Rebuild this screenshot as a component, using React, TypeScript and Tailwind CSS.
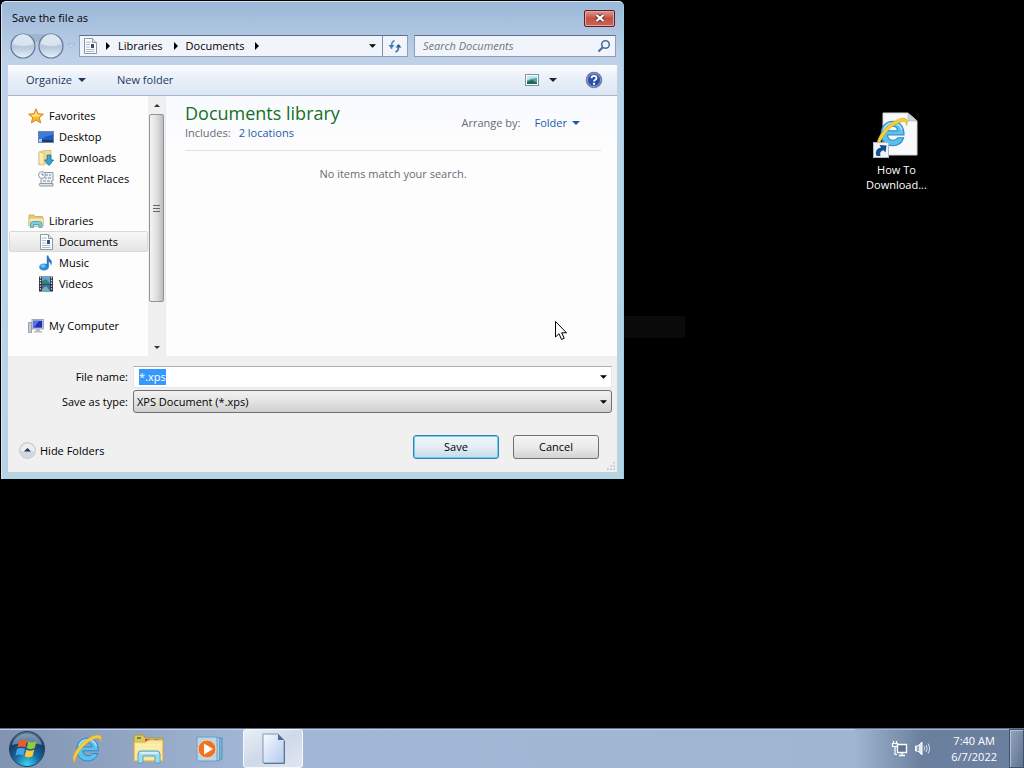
import { useEffect, useRef } from "react";
import type { ReactNode } from "react";

interface TreeItem {
  label: string;
  icon: ReactNode;
  selected?: boolean;
}

interface TreeGroup extends TreeItem {
  items: TreeItem[];
}

const Caret = ({
  size = "w-2 h-1",
  className = "",
}: {
  size?: string;
  className?: string;
}) => (
  <svg viewBox="0 0 8 4" className={`shrink-0 ${size} ${className}`}>
    <path d="M0 0H8L4 4Z" fill="currentColor" />
  </svg>
);

const Chevron = () => (
  <svg viewBox="0 0 4 8" className="w-1 h-2 shrink-0">
    <path d="M0 0L4 4L0 8Z" fill="#000" />
  </svg>
);

const StarIcon = () => (
  <svg viewBox="0 0 16 16" className="w-4 h-4">
    <path
      d="M8 .8L10 5.8L15.4 6.2L11.3 9.6L12.7 14.9L8 12L3.4 14.9L4.7 9.6L.6 6.2L6 5.8Z"
      fill="#fbb829"
      stroke="#d8801c"
      strokeWidth="1"
      strokeLinejoin="round"
    />
    <path d="M8 2.8L9.3 6.6L13 7L10 8.6L8 8.4L5 9L3.4 7L6.7 6.6Z" fill="#ffe57c" />
  </svg>
);

const DesktopIcon = () => (
  <svg viewBox="0 0 16 16" className="w-4 h-4">
    <rect x=".5" y="2.5" width="15" height="11" fill="#2358b5" stroke="#6b87ae" />
    <path d="M1 3H15V6Q8 6 1 12Z" fill="#3f7bd6" />
    <rect x="1" y="11" width="14" height="2" fill="#18386f" />
    <rect x="1" y="10" width="3" height="3" fill="#8ed0ee" />
  </svg>
);

const DownloadsIcon = () => (
  <svg viewBox="0 0 16 16" className="w-4 h-4">
    <path d="M1 2L6 .5H13V14H6L1 15Z" fill="#f3dd8c" stroke="#cdb15c" strokeWidth=".7" />
    <path d="M1 2L6 3V15L1 14.5Z" fill="#fbeeb4" stroke="#cdb15c" strokeWidth=".6" />
    <path
      d="M9 5H13V10H15.7L11 15.5L6.5 10H9Z"
      fill="#3ba1dc"
      stroke="#1c6ea5"
      strokeWidth=".8"
    />
  </svg>
);

const RecentIcon = () => (
  <svg viewBox="0 0 16 16" className="w-4 h-4">
    <path d="M5 1.5H15V10H13.5V13H3V8" fill="#eef1f5" stroke="#8e99a8" />
    <path d="M7 4H10M11 4H13M7 7H9M10 7H13M5 10H8M9 10H12" stroke="#77859a" />
    <path d="M1.5 12.5H15V15H2Q.8 14 1.5 12.5Z" fill="#dfe3e9" stroke="#8e99a8" />
    <circle cx="4" cy="4" r="3.4" fill="#fafcff" stroke="#8e99a8" />
    <path d="M4 2V4H6" stroke="#5b6d85" fill="none" strokeWidth=".8" />
  </svg>
);

const LibrariesIcon = () => (
  <svg viewBox="0 0 16 16" className="w-4 h-4">
    <path d="M1 2H6L7 3.5H14.5V13H1Z" fill="#e8cd70" stroke="#c1a14a" strokeWidth=".7" />
    <path d="M1 5H15.5V13H1Z" fill="#f8e9a6" stroke="#c9ae5e" strokeWidth=".6" />
    <path
      d="M2.5 14.5V11Q2.5 8.5 5 8.5H11.5Q14 8.5 14 11V14.5H11V11.5H5.5V14.5Z"
      fill="#7ccbe8"
      stroke="#4698bd"
      strokeWidth=".8"
    />
  </svg>
);

const DocumentIcon = () => (
  <svg viewBox="0 0 16 16" className="w-4 h-4">
    <path d="M2.5 .5H10.5L14.5 4.5V15.5H2.5Z" fill="#fcfdfe" stroke="#8a97a8" />
    <path d="M10.5 .5V4.5H14.5" fill="#dde5ee" stroke="#8a97a8" />
    <path
      d="M4 4H9M4 6.5H8M4 9H8M4 11.5H12.5M4 13.5H12.5"
      stroke="#97a8bd"
      strokeWidth=".8"
    />
    <rect x="9" y="6" width="3" height="4" fill="#35506f" />
  </svg>
);

const MusicIcon = () => (
  <svg viewBox="0 0 16 16" className="w-4 h-4">
    <ellipse cx="6" cy="12" rx="4.8" ry="3.6" fill="#2b8bd4" />
    <ellipse cx="5" cy="11" rx="2.6" ry="1.7" fill="#6fc0f0" />
    <path
      d="M8.8 12V.5H10.2Q10.7 3 12.5 4.5Q15 7 12.8 11Q13 7.5 10.8 6.5V12Z"
      fill="#2577c4"
    />
  </svg>
);

const VideosIcon = () => (
  <svg viewBox="0 0 16 16" className="w-4 h-4">
    <rect x="1" y=".5" width="14" height="15" fill="#2c3037" />
    <rect x="4" y="1" width="8" height="6.5" fill="#58a9d8" />
    <rect x="4" y="8.5" width="8" height="6.5" fill="#3a6f9c" />
    <path d="M4 5L8 3L12 7.5H4Z" fill="#3b8074" />
    <path d="M4 13L8 10L12 15H4Z" fill="#69b6c4" />
    <path
      d="M2.5 1V15M13.5 1V15"
      stroke="#e7ebef"
      strokeWidth="1.3"
      strokeDasharray="1.4 1.4"
    />
  </svg>
);

const ComputerIcon = () => (
  <svg viewBox="0 0 16 16" className="w-4 h-4">
    <path d="M.5 4.5H3.5V14.5H.5Z" fill="#c7ccd3" stroke="#858e99" strokeWidth=".8" />
    <rect
      x="4"
      y="1.5"
      width="11.5"
      height="9.5"
      fill="#d5dae1"
      stroke="#8e98a6"
      strokeWidth=".8"
    />
    <rect x="5.2" y="2.7" width="9" height="7" fill="#1c2fc0" />
    <path d="M5.2 2.7H11L6 9.7H5.2Z" fill="#5572e6" />
    <path d="M8 11H12V13H14V14.5H6V13H8Z" fill="#b5bcc6" />
  </svg>
);

const IeLogo = ({ className }: { className: string }) => (
  <svg viewBox="0 0 32 32" className={className}>
    <path
      d="M16.5 5C23.5 5 27.5 10 27.3 17.8H11.8C12 21 14 22.8 17 22.8C19.2 22.8 20.6 21.9 21.5 20.5H27C25.5 25 21.8 28 16.7 28C10.3 28 5.8 23.4 5.8 16.6C5.8 9.9 10.4 5 16.5 5ZM11.9 13.9H21.3C21 11.2 19.2 9.7 16.7 9.7C14.1 9.7 12.4 11.2 11.9 13.9Z"
      fill="#58c2ee"
      stroke="#2b88c2"
      strokeWidth="1"
    />
    <path d="M8 13Q10 7 17 6.5Q23 7 25.3 13" fill="none" stroke="#a9e3fa" strokeWidth="1.5" />
    <path
      d="M4.5 29.5C-.5 28 3 19 9.5 12C16.5 4.5 27 -.5 30 3.5C31 5 30.5 7 29.5 9C29.8 6.5 29 5 26.5 5.2C21.5 5.6 14.5 10.5 10 16.2C5.5 22 3 28.5 4.5 29.5Z"
      fill="#f8cd3a"
      stroke="#d9a826"
      strokeWidth=".6"
    />
  </svg>
);

const StartOrb = () => (
  <svg viewBox="0 0 38 38" className="w-[38px] h-[38px]">
    <defs>
      <radialGradient id="orb" cx=".5" cy=".95" r=".95">
        <stop offset="0" stopColor="#3fd5f5" />
        <stop offset=".4" stopColor="#13699f" />
        <stop offset=".75" stopColor="#173b62" />
        <stop offset="1" stopColor="#5d7c9e" />
      </radialGradient>
    </defs>
    <circle cx="19" cy="19" r="17.5" fill="url(#orb)" stroke="#263e5c" />
    <path d="M4 15A15.5 15.5 0 0 1 34 15Q19 10 4 15Z" fill="#b9cee2" opacity=".5" />
    <path d="M11 11Q15 8.500 19 11L17.3 17.5Q13.5 15.5 9.5 17.5Z" fill="#ee5a27" />
    <path d="M20.3 11.5Q24.5 13.5 28.5 11.3L26.7 18Q22.7 20.3 18.7 18Z" fill="#96c93c" />
    <path d="M9 19Q13 17 17 19L15.3 25.5Q11.5 23.5 7.5 25.5Z" fill="#45a5e8" />
    <path d="M18.3 19.8Q22.3 22 26.3 19.6L24.5 26.3Q20.5 28.5 16.6 26.3Z" fill="#fccb3a" />
  </svg>
);

const ExplorerIcon = () => (
  <svg viewBox="0 0 34 30" className="w-[34px] h-[30px]">
    <path d="M2 3Q2 1 4 1H11L13 4H29Q31 4 31 6V26H2Z" fill="#e6c55d" stroke="#b7943a" />
    <path d="M5 3H9V5H5Z" fill="#4a9c42" />
    <path d="M13 5H18V7H13Z" fill="#cc4c2c" />
    <path d="M22 5H27V7H22Z" fill="#3b81c4" />
    <path d="M2 8H14L16 6H31V27H2Z" fill="#f9e79c" stroke="#cfae52" />
    <path d="M4 11H30M4 14H30" stroke="#fff5c6" />
    <path
      d="M6 29V20Q6 17 9 17H25Q28 17 28 20V29H23V22H11V29Z"
      fill="#a1d9ef"
      stroke="#5aa3c8"
    />
    <path d="M8 19H26" stroke="#e4f7fd" strokeWidth="1.5" />
  </svg>
);

const MediaPlayerIcon = () => (
  <svg viewBox="0 0 28 26" className="w-7 h-[26px]">
    <path d="M8 2H26V23L8 25Z" fill="#7fb5d8" stroke="#5590b8" />
    <path d="M5 1.5H23.5V24.5H5Z" fill="#a6cce6" stroke="#5e9ac2" />
    <path d="M1 1H21V25H1Z" fill="#b9d5ea" stroke="#6b9fc4" />
    <circle cx="11" cy="13" r="9" fill="#ee7322" stroke="#fbd3ae" />
    <path d="M8 7.5L17 13L8 18.5Z" fill="#fff" />
  </svg>
);

const BlankPageIcon = () => (
  <svg viewBox="0 0 26 32" className="w-[26px] h-8">
    <defs>
      <linearGradient id="page" x1="0" y1="0" x2="1" y2="1">
        <stop offset="0" stopColor="#f7fbff" />
        <stop offset="1" stopColor="#b3caed" />
      </linearGradient>
    </defs>
    <path
      d="M3 1H18L24 7V30H3Z"
      fill="url(#page)"
      stroke="#8296b5"
      strokeLinejoin="round"
    />
    <path d="M18 1L24 7H18Z" fill="#4f6c97" />
    <path d="M24.5 8V30.5H4" fill="none" stroke="#5d7499" />
  </svg>
);

const NetworkIcon = () => (
  <svg viewBox="0 0 17 17" className="w-[17px] h-[17px]">
    <path
      d="M6.5 4.5H15.5V12.5H6.5Z"
      fill="#60758f"
      stroke="#fff"
      strokeWidth="1.3"
    />
    <path d="M8 15.5H14M11 13V15" stroke="#fff" strokeWidth="1.3" />
    <path
      d="M1.5 3.5H6.5V6.5H1.5ZM2.5 1V3.5M5.5 1V3.5M4 6.5V14.5H6"
      fill="none"
      stroke="#fff"
      strokeWidth="1.2"
    />
  </svg>
);

const SpeakerIcon = () => (
  <svg viewBox="0 0 17 15" className="w-[17px] h-[15px]">
    <path d="M1.5 5H4L8 1V14L4 10H1.5Z" fill="#dfe7f0" stroke="#fff" />
    <path d="M4 5V10" stroke="#596d88" />
    <path
      d="M10 5.5Q11.5 7.5 10 9.5M12 4Q14.3 7.5 12 11M14 2.5Q17.2 7.5 14 12.5"
      fill="none"
      stroke="#e3eaf2"
      strokeWidth=".9"
    />
  </svg>
);

const tree: TreeGroup[] = [
  {
    label: "Favorites",
    icon: <StarIcon />,
    items: [
      { label: "Desktop", icon: <DesktopIcon /> },
      { label: "Downloads", icon: <DownloadsIcon /> },
      { label: "Recent Places", icon: <RecentIcon /> },
    ],
  },
  {
    label: "Libraries",
    icon: <LibrariesIcon />,
    items: [
      { label: "Documents", icon: <DocumentIcon />, selected: true },
      { label: "Music", icon: <MusicIcon /> },
      { label: "Videos", icon: <VideosIcon /> },
    ],
  },
  { label: "My Computer", icon: <ComputerIcon />, items: [] },
];

const TitleBar = () => (
  <div className="flex h-8 items-center justify-between pl-1 pr-0.5">
    <h1>Save the file as</h1>
    <button
      aria-label="Close"
      className="flex h-[17px] w-[31px] items-center justify-center rounded-[2px] border border-[#5a1f2b] bg-linear-to-b from-[#dc9a90] via-[#c25043] to-[#cb6553] shadow-[inset_0_0_0_1px_#e0a79d]"
    >
      <svg viewBox="0 0 12 10" className="h-[10px] w-3">
        <path d="M2.5 2L9.5 8M9.5 2L2.5 8" stroke="#5c3338" strokeWidth="4" />
        <path d="M2.5 2L9.5 8M9.5 2L2.5 8" stroke="#fff" strokeWidth="2.3" />
      </svg>
    </button>
  </div>
);

const AddressRow = () => (
  <div className="mb-[7px] flex h-6 items-center">
    <svg viewBox="0 0 71 28" className="h-7 w-[71px] shrink-0">
      <defs>
        <linearGradient id="nav" x1="0" y1="0" x2="0" y2="1">
          <stop offset="0" stopColor="#d3dfec" />
          <stop offset=".55" stopColor="#b7c8dc" />
          <stop offset="1" stopColor="#e6f2fa" />
        </linearGradient>
      </defs>
      <path d="M15 2H43V8Q29 12 15 8Z" fill="#a2b5cf" />
      <circle cx="15" cy="14" r="12" fill="url(#nav)" stroke="#63799a" strokeWidth="1.2" />
      <circle cx="43" cy="14" r="12" fill="url(#nav)" stroke="#63799a" strokeWidth="1.2" />
      <path
        d="M5 12A10 10 0 0 1 25 12Q15 16 5 12ZM33 12A10 10 0 0 1 53 12Q43 16 33 12Z"
        fill="#e3ecf5"
        opacity=".7"
      />
      <path d="M60 12H67L63.5 16Z" fill="#c9d9eb" stroke="#9fb3ce" strokeWidth=".8" />
    </svg>
    <div className="flex h-[22px] min-w-0 flex-1 items-center border border-[#8c9fba] border-t-[#566f92] bg-[#f1f5fb]">
      <span className="ml-0.5 mr-2">
        <DocumentIcon />
      </span>
      <Chevron />
      <button className="ml-2 mr-[11px]">Libraries</button>
      <Chevron />
      <button className="ml-2 mr-[11px]">Documents</button>
      <Chevron />
      <button aria-label="Previous locations" className="ml-auto mr-1.5">
        <Caret size="w-[7px] h-1" />
      </button>
      <button
        aria-label="Refresh"
        className="flex h-full w-[25px] items-center justify-center border-l border-[#7d93b1]"
      >
        <svg viewBox="0 0 14 14" className="h-3.5 w-3.5">
          <path
            d="M3.5 10V6.5Q3.5 3 6.5 1.5"
            fill="none"
            stroke="#5b93c4"
            strokeWidth="1.6"
          />
          <path d="M.5 6H6.5L3.5 9.5Z" fill="#3d7ab4" />
          <path
            d="M10.5 6V8.5Q10.5 12 7.5 13"
            fill="none"
            stroke="#3f6f9f"
            strokeWidth="1.6"
          />
          <path d="M7.5 8.5H13.5L10.5 5Z" fill="#255f99" />
        </svg>
      </button>
    </div>
    <div className="ml-1.5 mr-px flex h-[22px] w-[202px] items-center border border-[#8c9fba] border-t-[#566f92] bg-[#f1f5fb] pl-2 pr-1">
      <input
        aria-label="Search Documents"
        placeholder="Search Documents"
        className="w-full min-w-0 outline-none placeholder:italic placeholder:text-[#6f757d]"
      />
      <svg viewBox="0 0 14 14" className="h-3.5 w-3.5 shrink-0">
        <circle cx="8.5" cy="5.5" r="3.8" fill="#e9f3fc" stroke="#4a6f9c" strokeWidth="1.6" />
        <path d="M5.8 8.2L1.5 12.5" stroke="#4a6f9c" strokeWidth="2.2" />
      </svg>
    </div>
  </div>
);

const Toolbar = () => (
  <div className="flex h-[31px] items-center border-b border-[#a4b5cd] bg-linear-to-b from-[#fafcfe] via-[#e8eff9] to-[#dce6f3] pl-[18px] pr-3.5 text-[#1e395b]">
    <button className="flex items-center gap-1.5">
      Organize
      <Caret />
    </button>
    <button className="ml-[31px]">New folder</button>
    <button aria-label="Change your view" className="ml-auto flex items-center gap-2.5">
      <svg viewBox="0 0 14 12" className="h-3 w-3.5">
        <rect x=".5" y=".5" width="13" height="11" fill="#fff" stroke="#7d94a8" />
        <rect x="2" y="2" width="10" height="8" fill="#4aa79e" />
        <path d="M2 2H12V4Q6 4 2 6.5Z" fill="#bfe3ef" />
        <path d="M2 8L7 6L12 9V10H2Z" fill="#1f665d" />
      </svg>
      <Caret className="text-[#1b2430]" />
    </button>
    <button aria-label="Help" className="ml-7 flex">
      <svg viewBox="0 0 18 18" className="h-[18px] w-[18px]">
        <circle cx="9" cy="9" r="7.7" fill="#2d4fa5" stroke="#7483a5" strokeWidth="1.2" />
        <circle cx="9" cy="9" r="6.5" fill="none" stroke="#a8badf" strokeWidth=".8" />
        <path
          d="M6.5 7.3Q6.5 4.8 9 4.8Q11.5 4.8 11.5 6.9Q11.5 8.2 10 9Q9 9.6 9 10.6"
          fill="none"
          stroke="#fff"
          strokeWidth="1.8"
        />
        <rect x="8" y="11.8" width="2" height="2" fill="#fff" />
      </svg>
    </button>
  </div>
);

const TreeRow = ({ item, nested }: { item: TreeItem; nested?: boolean }) => (
  <a
    href="#"
    className={`flex h-[21px] items-center gap-[5px] border ${nested ? "pl-7" : "pl-[18px]"} ${
      item.selected
        ? "rounded-[2px] border-[#d9d9d9] bg-linear-to-b from-[#f8f8f8] to-[#e5e5e5]"
        : "border-transparent"
    }`}
  >
    {item.icon}
    {item.label}
  </a>
);

const FolderTree = () => (
  <nav className="flex w-[157px] shrink-0">
    <ul className="flex flex-1 flex-col gap-[21px] pb-5 pl-px pt-[9px]">
      {tree.map((group) => (
        <li key={group.label}>
          <TreeRow item={group} />
          {group.items.map((item) => (
            <TreeRow key={item.label} item={item} nested />
          ))}
        </li>
      ))}
    </ul>
    <div className="flex w-[17px] flex-col items-center bg-[#f0f0f1]">
      <div className="flex h-[18px] items-center">
        <Caret size="w-1.5 h-[3px]" className="rotate-180 text-[#333]" />
      </div>
      <div className="flex h-[188px] w-[15px] flex-col items-center justify-center gap-0.5 rounded-[2px] border border-[#929292] bg-linear-to-r from-[#f4f4f4] via-[#e0e0e2] to-[#bdbdc1]">
        <span className="h-px w-[7px] bg-[#666]" />
        <span className="h-px w-[7px] bg-[#666]" />
        <span className="h-px w-[7px] bg-[#666]" />
      </div>
      <div className="mt-auto flex h-[18px] items-center">
        <Caret size="w-1.5 h-[3px]" className="text-[#333]" />
      </div>
    </div>
  </nav>
);

const LibraryPane = () => (
  <main className="flex-1 border-l border-[#e8ebf1] bg-linear-to-b from-[#f8faff] to-[#fdfdfd] to-20% pl-[19px] pr-4 text-[#666b73]">
    <div className="flex h-[55px] items-center justify-between border-b border-[#dfe1e5] pr-[21px]">
      <div>
        <h2 className="text-[18px] leading-6 text-[#15701f]">Documents library</h2>
        <p className="mb-1 flex gap-2 leading-4">
          Includes:
          <a href="#" className="text-[#1a5ba8]">
            2 locations
          </a>
        </p>
      </div>
      <div className="flex items-center">
        Arrange by:
        <button className="ml-3.5 flex items-center gap-[5px] text-[#1a5ba8]">
          Folder
          <Caret />
        </button>
      </div>
    </div>
    <p className="mt-[15px] text-center">No items match your search.</p>
  </main>
);

const SaveForm = () => {
  const fileName = useRef<HTMLInputElement>(null);

  useEffect(() => {
    fileName.current?.focus();
    fileName.current?.select();
  }, []);

  return (
    <form
      onSubmit={(e) => e.preventDefault()}
      className="bg-[#f0f0f1] pb-[13px] pl-[11px] pr-[5px] pt-2.5"
    >
      <div className="grid grid-cols-[109px_1fr] items-center gap-x-[5px] gap-y-0.5">
        <label htmlFor="file-name" className="text-right">
          File name:
        </label>
        <div className="flex h-[22px] items-center border border-[#e4e6ea] border-t-[#abadb3] bg-white pl-[5px] pr-1">
          <input
            id="file-name"
            ref={fileName}
            defaultValue="*.xps"
            className="w-full min-w-0 outline-none selection:bg-[#3399ff] selection:text-white"
          />
          <Caret size="w-[7px] h-1" />
        </div>
        <label htmlFor="file-type" className="text-right">
          Save as type:
        </label>
        <div className="relative">
          <select
            id="file-type"
            className="block h-[23px] w-full appearance-none rounded-[3px] border border-[#707070] bg-linear-to-b from-[#f2f2f2] via-[#e3e3e3] to-[#cfcfcf] pl-[3px] outline-none"
          >
            <option>XPS Document (*.xps)</option>
          </select>
          <Caret
            size="w-[7px] h-1"
            className="pointer-events-none absolute right-[5px] top-[10px]"
          />
        </div>
      </div>
      <div className="mt-[22px] flex items-center pr-[13px]">
        <button type="button" className="flex items-center gap-1 self-end">
          <svg viewBox="0 0 17 17" className="h-[17px] w-[17px]">
            <circle cx="8.5" cy="8.5" r="7.8" fill="#eceef2" stroke="#b9bdc5" />
            <path d="M1.5 9H15.5A7 7 0 0 1 1.5 9Z" fill="#d3d7de" />
            <path d="M5 9.5L8.5 6L12 9.5Z" fill="#24334f" />
          </svg>
          Hide Folders
        </button>
        <button
          type="submit"
          className="ml-auto h-6 w-[86px] rounded-[3px] border border-[#3c7fb1] bg-linear-to-b from-[#eef5f9] via-[#e3eef4] to-[#c5dbe8] shadow-[inset_0_0_0_1px_#62d4f2]"
        >
          Save
        </button>
        <button
          type="button"
          className="ml-3.5 h-6 w-[86px] rounded-[3px] border border-[#707070] bg-linear-to-b from-[#f4f4f4] via-[#ebebeb] to-[#d2d2d2]"
        >
          Cancel
        </button>
      </div>
    </form>
  );
};

const SaveDialog = () => (
  <section className="absolute left-px top-px w-full max-w-[623px] rounded-t-[5px] border border-[#d5e6f5] border-b-[#a8dbe8] border-r-[#8fd3e6] bg-linear-to-b from-[#9bb8d8] via-[#bfd1e8] via-12% to-[#b9d3e4] px-1.5 pb-1.5">
    <TitleBar />
    <AddressRow />
    <Toolbar />
    <div className="flex bg-[#fdfdfd]">
      <FolderTree />
      <LibraryPane />
    </div>
    <SaveForm />
    <svg viewBox="0 0 10 10" className="absolute bottom-2 right-2 h-2 w-2">
      <path
        d="M8 0H10V2H8ZM4 4H6V6H4ZM8 4H10V6H8ZM0 8H2V10H0ZM4 8H6V10H4ZM8 8H10V10H8Z"
        fill="#b9bec7"
      />
    </svg>
  </section>
);

const DesktopShortcut = () => (
  <a
    href="#"
    className="absolute right-[90px] top-[112px] flex w-[75px] flex-col items-center text-center leading-[15px] text-white"
  >
    <span className="relative mb-1.5">
      <svg viewBox="0 0 44 44" className="h-11 w-11">
        <path d="M8 1H33L42 9V43H8Z" fill="#f7f9fb" stroke="#d1d6dc" />
        <path d="M33 1V9H42Z" fill="#ccd3db" stroke="#a8b1bb" strokeWidth=".6" />
      </svg>
      <span className="absolute left-0 top-1">
        <IeLogo className="h-[34px] w-[34px]" />
      </span>
      <svg viewBox="0 0 16 16" className="absolute -bottom-0.5 -left-0.5 h-4 w-4">
        <rect x=".5" y=".5" width="15" height="15" fill="#eef3f8" stroke="#aeb9c5" />
        <path
          d="M3.5 14Q1 7 8 5.5L6.5 3L13.5 3.5L12.5 10.5L10.5 8.3Q6 9.5 7.5 14Z"
          fill="#174e93"
        />
      </svg>
    </span>
    How To
    <br />
    Download...
  </a>
);

const Taskbar = () => (
  <footer className="flex h-10 items-center border-t border-[#5f7391] bg-linear-to-r from-[#8094b2] via-[#a3b8d6] via-25% to-[#9fb4d1] text-white shadow-[inset_0_1px_0_#c3d1e3]">
    <button aria-label="Start" className="ml-2 mr-[25px]">
      <StartOrb />
    </button>
    <button aria-label="Internet Explorer" className="mr-[29px]">
      <IeLogo className="h-8 w-8" />
    </button>
    <button aria-label="Windows Explorer" className="mr-[30px]">
      <ExplorerIcon />
    </button>
    <button aria-label="Windows Media Player" className="mr-[19px]">
      <MediaPlayerIcon />
    </button>
    <button
      aria-label="XPS Document Writer"
      className="flex h-full w-[60px] items-center justify-center rounded-[3px] border border-[#f5f9fd] bg-linear-to-br from-[#e9eff7] via-[#cfd9e7] to-[#dfe7f1]"
    >
      <BlankPageIcon />
    </button>
    <div className="ml-auto flex h-full items-center bg-linear-to-r from-transparent to-[#6b809e] to-40% pl-9 shadow-[inset_0_1px_0_#a5b4c8]">
      <NetworkIcon />
      <span className="ml-1.5">
        <SpeakerIcon />
      </span>
      <div className="ml-5 mr-3 text-center leading-4">
        7:40 AM
        <br />
        6/7/2022
      </div>
      <button
        aria-label="Show desktop"
        className="h-full w-[15px] border border-[#3f516b] bg-linear-to-br from-[#94a5bd] to-[#5f738f] shadow-[inset_1px_1px_0_#b3c0d1]"
      />
    </div>
  </footer>
);

export default function App() {
  return (
    <div className="flex min-h-screen flex-col bg-black font-['Open_Sans','Noto_Sans',sans-serif] text-[11px] leading-4 text-black">
      <div className="relative min-h-[500px] flex-1 overflow-hidden">
        <SaveDialog />
        <div className="absolute left-[624px] top-[316px] h-[22px] w-[61px] bg-[#0a0a0a]" />
        <DesktopShortcut />
        <svg viewBox="0 0 13 20" className="absolute left-[555px] top-[321px] h-5 w-[13px]">
          <path
            d="M.5 .5V16L4 12.7L6.5 18.5L9.2 17.3L6.7 11.8H11.5Z"
            fill="#fff"
            stroke="#000"
          />
        </svg>
      </div>
      <Taskbar />
    </div>
  );
}
